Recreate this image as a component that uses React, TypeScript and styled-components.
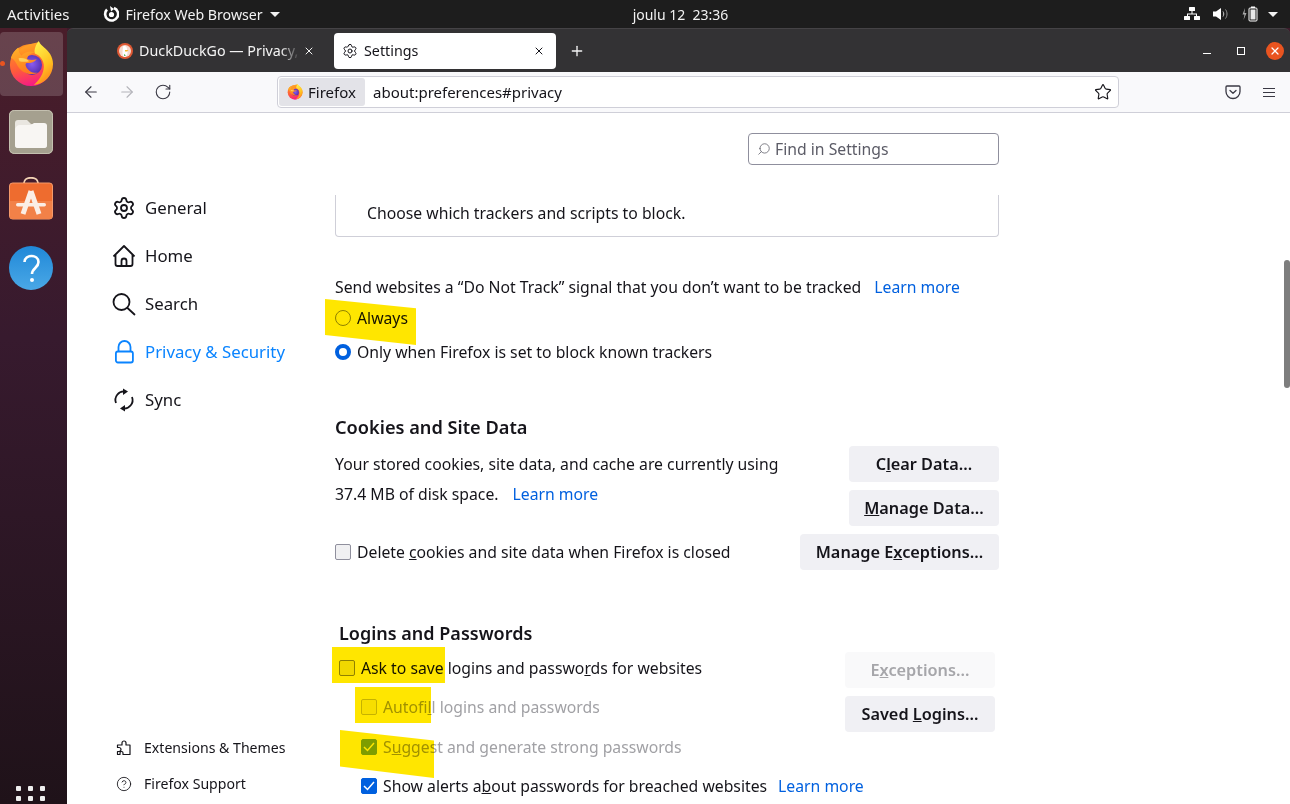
import React from "react";
import styled, { createGlobalStyle } from "styled-components";
import { Search, Settings, Star, X, Plus, ArrowLeft, ArrowRight, RotateCw, CircleHelp } from "lucide-react";

const UI_FONT = `"Noto Sans", "Open Sans", sans-serif`;

const GlobalStyle = createGlobalStyle`
  html, body {
    margin: 0;
    height: 100%;
    overflow: hidden;
    background: #fff;
  }
  body {
    font-family: ${UI_FONT};
    color: #15141a;
  }
  * {
    box-sizing: border-box;
  }
`;

const Desktop = styled.div`
  width: 1290px;
  height: 804px;
  display: flex;
  flex-direction: column;
  overflow: hidden;
  position: relative;
`;

const TopBar = styled.div`
  height: 28px;
  flex: none;
  display: flex;
  align-items: center;
  background: #1d1d1d;
  color: #f2f2f2;
  font-size: 15px;
  padding: 0 0 0 7px;
`;

const TopAppMenu = styled.div`
  display: flex;
  align-items: center;
  gap: 7px;
  margin-left: 33px;
  width: 513px;
  font-size: 14.2px;
`;

const Clock = styled.div`
  width: 130px;
  text-align: center;
  white-space: nowrap;
  font-size: 14px;
`;

const TopTray = styled.div`
  margin-left: auto;
  display: flex;
  align-items: center;
  gap: 13px;
  padding-right: 12px;
`;

const Caret = styled.span`
  width: 0;
  height: 0;
  border-left: 5px solid transparent;
  border-right: 5px solid transparent;
  border-top: 5px solid #f2f2f2;
`;

const TrayCaret = styled(Caret)`
  margin-left: -3px;
`;

const Body = styled.div`
  flex: 1;
  display: flex;
  min-height: 0;
  background: #3d1b2b;
`;

const Dock = styled.div`
  width: 67px;
  flex: none;
  display: flex;
  flex-direction: column;
  align-items: flex-start;
  background: linear-gradient(180deg, #4a1d2a 0%, #371a2e 40%, #1f1219 100%);
  padding-top: 4px;
  position: relative;
`;

const DockItem = styled.div<{ $active?: boolean }>`
  width: 63px;
  height: 64px;
  margin-bottom: 4px;
  padding-right: 1px;
  display: flex;
  align-items: center;
  justify-content: center;
  border-radius: 4px;
  position: relative;
  background: ${(p) => (p.$active ? "rgba(255,255,255,0.17)" : "transparent")};
`;

const RunDot = styled.span`
  position: absolute;
  left: 0;
  top: 29px;
  width: 5px;
  height: 5px;
  border-radius: 50%;
  background: #e95420;
`;

const AppGrid = styled.div`
  margin-top: auto;
  margin-left: 16px;
  height: 18px;
  display: grid;
  grid-template-columns: repeat(3, 5px);
  grid-auto-rows: 5px;
  gap: 5px 7px;
  overflow: hidden;
  span {
    background: #eee;
    border-radius: 1px;
  }
`;

const Window = styled.div`
  flex: 1;
  min-width: 0;
  display: flex;
  flex-direction: column;
`;

const TabStrip = styled.div`
  height: 44px;
  flex: none;
  display: flex;
  align-items: center;
  background: #333234;
  border-radius: 6px 6px 0 0;
  border-top: 1px solid #454346;
  color: #f4f4f4;
  font-size: 14.3px;
  padding-left: 42px;
`;

const Tab = styled.div<{ $selected?: boolean }>`
  height: 36px;
  width: ${(p) => (p.$selected ? 222 : 217)}px;
  margin-right: ${(p) => (p.$selected ? 0 : 8)}px;
  flex: none;
  display: flex;
  align-items: center;
  gap: 6px;
  padding: 0 11px 0 8px;
  border-radius: 4px;
  background: ${(p) => (p.$selected ? "#fff" : "transparent")};
  color: ${(p) => (p.$selected ? "#15141a" : "#f4f4f4")};
`;

const TabLabel = styled.span<{ $fade?: boolean }>`
  flex: 1;
  overflow: hidden;
  white-space: nowrap;
  margin-top: -1px;
  ${(p) =>
    p.$fade &&
    "margin-right: -3px; mask-image: linear-gradient(90deg, #000 88%, transparent);"}
`;

const NewTab = styled.div`
  margin-left: 13px;
  display: flex;
`;

const WindowControls = styled.div`
  margin-left: auto;
  display: flex;
  align-items: center;
  gap: 26px;
  padding-right: 6px;
`;

const MinimizeGlyph = styled.span`
  width: 8px;
  height: 1px;
  margin-top: 5px;
  background: #fff;
`;

const MaximizeGlyph = styled.span`
  width: 8px;
  height: 8px;
  border: 1px solid #fff;
`;

const CloseCircle = styled.div`
  width: 18px;
  height: 18px;
  margin-left: -5px;
  border-radius: 50%;
  background: #e95420;
  display: flex;
  align-items: center;
  justify-content: center;
`;

const Toolbar = styled.div`
  height: 41px;
  flex: none;
  display: flex;
  align-items: center;
  background: #f9f9fb;
  border-bottom: 1px solid #cfcfd8;
  padding-left: 15px;
`;

const NavButtons = styled.div`
  display: flex;
  gap: 18px;
  width: 195px;
`;

const UrlBar = styled.div`
  width: 842px;
  height: 32px;
  display: flex;
  align-items: center;
  background: #fff;
  border: 1px solid #cfcfd8;
  border-radius: 4px;
  padding: 1px;
  font-size: 15px;
`;

const IdentityBox = styled.div`
  height: 28px;
  width: 86px;
  display: flex;
  align-items: center;
  gap: 5px;
  padding-left: 8px;
  background: #e3e3e8;
  border-radius: 3px;
`;

const UrlText = styled.span`
  margin-left: 8px;
  flex: 1;
`;

const BookmarkStar = styled(Star)`
  margin-right: 5px;
`;

const ToolbarRight = styled.div`
  display: flex;
  align-items: center;
  gap: 22px;
  margin-left: 106px;
`;

const HamburgerGlyph = styled.span`
  width: 12px;
  height: 9px;
  border-top: 1px solid #3a3944;
  border-bottom: 1px solid #3a3944;
  position: relative;
  &::after {
    content: "";
    position: absolute;
    left: 0;
    right: 0;
    top: 3px;
    height: 1px;
    background: #3a3944;
  }
`;

const Page = styled.div`
  flex: 1;
  min-height: 0;
  display: flex;
  position: relative;
  overflow: hidden;
  background: #fff;
`;

const Sidebar = styled.nav`
  width: 268px;
  flex: none;
  display: flex;
  flex-direction: column;
  padding: 71px 0 2px 45px;
`;

const NavItem = styled.div<{ $active?: boolean }>`
  height: 48px;
  display: flex;
  align-items: center;
  gap: 9px;
  font-size: 16.8px;
  color: ${(p) => (p.$active ? "#0a84ff" : "#15141a")};
`;

const NudgedLabel = styled.span`
  margin-top: -2px;
`;

const SidebarFooter = styled.div`
  margin-top: auto;
`;

const FooterItem = styled.div`
  height: 36px;
  display: flex;
  align-items: center;
  gap: 12px;
  padding-left: 4px;
  font-size: 14.1px;
`;

const Main = styled.main`
  width: 664px;
  flex: none;
  display: flex;
  flex-direction: column;
  padding-top: 20px;
  font-size: 15.75px;
`;

const FindBox = styled.div`
  align-self: flex-end;
  width: 251px;
  height: 32px;
  flex: none;
  display: flex;
  align-items: center;
  gap: 4px;
  padding-left: 8px;
  border: 1px solid #8f8f9d;
  border-radius: 4px;
  color: #5b5b66;
`;

const FindIcon = styled(Search)`
  transform: scaleX(-1);
`;

const ClippedCard = styled.div`
  margin-top: 30px;
  height: 42px;
  flex: none;
  padding: 8px 0 0 31px;
  line-height: 20px;
  border: 1px solid #cfcfd8;
  border-top: none;
  border-radius: 0 0 4px 4px;
`;

const Line = styled.div<{ $top?: number }>`
  height: 24px;
  flex: none;
  line-height: 24px;
  white-space: nowrap;
  margin-top: ${(p) => p.$top ?? 0}px;
  position: relative;
`;

const OptionRow = styled(Line)<{ $indent?: boolean; $muted?: boolean }>`
  display: flex;
  align-items: center;
  gap: 6px;
  padding-left: ${(p) => (p.$indent ? 22 : 0)}px;
  color: ${(p) => (p.$muted ? "#a1a1a5" : "#15141a")};
`;

const Link = styled.a<{ $gap?: number }>`
  color: #0060df;
  margin-left: ${(p) => p.$gap ?? 11}px;
`;

const Radio = styled.span<{ $on?: boolean }>`
  width: 16px;
  height: 16px;
  flex: none;
  border-radius: 50%;
  background: #fff;
  border: ${(p) => (p.$on ? "4px solid #0060df" : "1px solid #8f8f9d")};
`;

const CheckBox = styled.span<{ $on?: boolean; $muted?: boolean }>`
  width: 16px;
  height: 16px;
  flex: none;
  border-radius: 2px;
  display: flex;
  align-items: center;
  justify-content: center;
  background: ${(p) => (p.$on ? "#0060df" : "#f0f0f2")};
  border: 1px solid ${(p) => (p.$on ? "#0060df" : "#8f8f9d")};
  opacity: ${(p) => (p.$muted ? 0.5 : 1)};
`;

const Heading = styled.h2<{ $inset?: boolean; $size: number }>`
  margin: 49px 0 0;
  height: 28px;
  flex: none;
  line-height: 28px;
  font-size: ${(p) => p.$size}px;
  font-weight: 600;
  white-space: nowrap;
  padding-left: ${(p) => (p.$inset ? 4 : 0)}px;
`;

const CookieGrid = styled.div`
  margin-top: 5px;
  display: grid;
  grid-template-columns: 1fr auto;
  row-gap: 8px;
  align-items: center;
`;

const UsageText = styled.div`
  align-self: start;
  padding-top: 3px;
  line-height: 30px;
  width: 450px;
  white-space: nowrap;
`;

const ButtonStack = styled.div`
  display: flex;
  flex-direction: column;
  align-items: flex-end;
  gap: 8px;
`;

const Button = styled.div<{ $disabled?: boolean; $wide?: boolean }>`
  width: ${(p) => (p.$wide ? 199 : 150)}px;
  height: 36px;
  display: flex;
  align-items: center;
  justify-content: center;
  border-radius: 4px;
  font-weight: 600;
  font-size: 16.3px;
  white-space: nowrap;
  background: ${(p) => (p.$disabled ? "#f9f9fa" : "#f0f0f4")};
  color: ${(p) => (p.$disabled ? "#a6a6aa" : "#15141a")};
`;

const LoginsGrid = styled.div`
  margin-top: 5px;
  padding: 0 4px;
  display: flex;
  justify-content: space-between;
`;

const LoginOptions = styled.div`
  flex: 1;
  min-width: 0;
  display: flex;
  flex-direction: column;
  padding-top: 4px;
`;

const Marker = styled.span<{ $left: number; $top: number; $w: number; $h: number; $clip?: string }>`
  position: absolute;
  left: ${(p) => p.$left}px;
  top: ${(p) => p.$top}px;
  width: ${(p) => p.$w}px;
  height: ${(p) => p.$h}px;
  background: #ffe600;
  mix-blend-mode: multiply;
  clip-path: ${(p) => p.$clip ?? "none"};
  pointer-events: none;
`;

const ScrollThumb = styled.div`
  position: absolute;
  right: 0;
  top: 147px;
  width: 6px;
  height: 128px;
  border-radius: 3px;
  background: #7e7e7e;
`;

const FirefoxLogo: React.FC<{ size: number }> = ({ size }) => {
  const id = `ff${size}`;
  return (
    <svg width={size} height={size} viewBox="0 0 48 48">
      <defs>
        <linearGradient id={`${id}a`} x1="0.3" y1="0" x2="0.6" y2="1">
          <stop offset="0" stopColor="#ff9420" />
          <stop offset="0.55" stopColor="#ff5a3c" />
          <stop offset="1" stopColor="#f5158c" />
        </linearGradient>
        <radialGradient id={`${id}b`} cx="0.5" cy="0.45" r="0.6">
          <stop offset="0" stopColor="#8a5cf0" />
          <stop offset="1" stopColor="#4c2aa8" />
        </radialGradient>
        <linearGradient id={`${id}c`} x1="0.3" y1="0" x2="0.7" y2="1">
          <stop offset="0" stopColor="#fff04a" />
          <stop offset="0.6" stopColor="#ffc01f" />
          <stop offset="1" stopColor="#ff7a1f" />
        </linearGradient>
        <linearGradient id={`${id}d`} x1="0" y1="0" x2="0.4" y2="1">
          <stop offset="0" stopColor="#ffb52a" />
          <stop offset="1" stopColor="#ff7a20" />
        </linearGradient>
      </defs>
      <circle cx="24" cy="25" r="22" fill={`url(#${id}a)`} />
      <path d="M33 1c-2 4-4 8-3 12-5-3-10-2-14 1l-1 1c-3-2-4-5-4-8-2 1-4 4-6 7l-2 8C5 9 20 3 33 1z" fill={`url(#${id}d)`} />
      <path
        d="M32 0c-3 4-5 9-4 13 6 2 11 9 9 17-1 6-5 11-10 16 11-1 20-10 20-22 0-8-5-14-9-17-2-2-5-4-6-7z"
        fill={`url(#${id}c)`}
      />
      <circle cx="25" cy="25" r="10.500" fill={`url(#${id}b)`} />
      <path
        d="M3 18c1-4 4-9 8-11 0 3 1 6 3 8 4-4 10-5 14-3-5 1-8 4-8 7 3 1 7 1 10 0-2 3-6 4-10 4-2 0-2 2-1 4 2 4 7 7 12 6-8 4-18 0-22-9-2-4-4-6-6-6z"
        fill={`url(#${id}d)`}
      />
      <path d="M11 18c4-1 8 0 11 3-3 1-7 1-10 0z" fill="#ffd05a" />
    </svg>
  );
};

const FilesIcon = () => (
  <svg width="44" height="44" viewBox="0 0 44 44">
    <rect x="0" y="0" width="44" height="44" rx="5" fill="#a5a08f" />
    <rect x="0.500" y="0.500" width="43" height="43" rx="5" fill="none" stroke="#c4c0b0" />
    <path d="M6 13a3 3 0 0 1 3-3h9l4 4h13a3 3 0 0 1 3 3v18a3 3 0 0 1-3 3H9a3 3 0 0 1-3-3z" fill="#e9e6e0" />
    <path d="M6 20a5 5 0 0 1 5-5h11l3-2h10a3 3 0 0 1 3 3v19a3 3 0 0 1-3 3H9a3 3 0 0 1-3-3z" fill="#f8f6f3" />
  </svg>
);

const SoftwareIcon = () => (
  <svg width="44" height="46" viewBox="0 0 44 46">
    <path d="M15 6c0-7 14-7 14 0" fill="none" stroke="#f3d2b4" strokeWidth="1.800" />
    <path d="M15 6l-1.500 2M29 6l1.500 2" stroke="#f3d2b4" strokeWidth="1.800" />
    <rect x="0.500" y="6" width="43" height="36" rx="3" fill="#ee6c2f" stroke="#f49a6b" />
    <path d="M1 24h42v15a3 3 0 0 1-3 3H4a3 3 0 0 1-3-3z" fill="#f28148" />
    <path d="M22 14l-8 23M22 14l8 23" stroke="#fbeee6" strokeWidth="5" fill="none" />
    <rect x="7" y="26" width="30" height="3.500" rx="1.700" fill="#fbeee6" />
  </svg>
);

const HelpIcon = () => (
  <svg width="44" height="44" viewBox="0 0 44 44">
    <defs>
      <linearGradient id="helpBg" x1="0" y1="0" x2="0" y2="1">
        <stop offset="0" stopColor="#2088d8" />
        <stop offset="1" stopColor="#4aa8e6" />
      </linearGradient>
    </defs>
    <circle cx="22" cy="22" r="22" fill="url(#helpBg)" />
    <path d="M15.500 16c0-8 14-8 14 0 0 6-6.500 6-6.500 12" fill="none" stroke="#fff" strokeWidth="2.600" />
    <circle cx="23" cy="34" r="2" fill="#fff" />
  </svg>
);

const DuckIcon = () => (
  <svg width="16" height="16" viewBox="0 0 16 16">
    <circle cx="8" cy="8" r="8" fill="#de5833" />
    <circle cx="8" cy="8" r="6" fill="#f6d9cf" />
    <path d="M6 3.500c2-1 4 0 4 2.500 0 1 .5 2 .5 4S9 14 7.500 14 5.500 11 5.500 9 6 6 6 3.500z" fill="#fff" />
    <path d="M8 7h3.500l-1.500 1.500H8z" fill="#f5b82e" />
    <path d="M7 11l2 1.500-2 .5z" fill="#4caf50" />
  </svg>
);

const FirefoxIndicator = () => (
  <svg width="16" height="16" viewBox="0 0 16 16">
    <path d="M4 3.500a6.500 6.500 0 1 0 7-1.500" fill="none" stroke="#fff" strokeWidth="2.600" />
    <circle cx="8.500" cy="8.500" r="2.600" fill="#fff" />
    <path d="M7 0l4 3-3 2.500z" fill="#fff" />
  </svg>
);

const NetworkIcon = () => (
  <svg width="16" height="14" viewBox="0 0 16 14" fill="#fff">
    <rect x="5" y="0" width="6" height="4" rx="0.500" />
    <rect x="0" y="9" width="6" height="4" rx="0.500" />
    <rect x="10" y="9" width="6" height="4" rx="0.500" />
    <path d="M7.500 4h1v2.500H13V9h-1V7.500H4V9H3V6.500h4.500z" />
  </svg>
);

const VolumeIcon = () => (
  <svg width="16" height="14" viewBox="0 0 16 14">
    <path d="M0 4.500h3L8 1v12L3 9.500H0z" fill="#fff" />
    <path d="M10 4.500c1 1.500 1 3.500 0 5" stroke="#ccc" fill="none" />
    <path d="M12.500 2.500c2 2.500 2 6.500 0 9" stroke="#999" fill="none" />
  </svg>
);

const BatteryIcon = () => (
  <svg width="16" height="16" viewBox="0 0 16 16">
    <path d="M3 2L0.500 8.500h2L1.500 14l3-7h-2z" fill="#aaa" />
    <rect x="7" y="2" width="8" height="13" rx="1" fill="none" stroke="#fff" />
    <rect x="9" y="0.500" width="4" height="1.500" fill="#fff" />
    <rect x="8.500" y="3.500" width="5" height="10" fill="#e8e8e8" />
  </svg>
);

const HomeIcon = () => (
  <svg width="24" height="24" viewBox="0 0 24 24" fill="none" stroke="#15141a" strokeWidth="1.800" strokeLinejoin="round">
    <path d="M1.500 12.500L12 2l10.500 10.500" />
    <path d="M3.500 11v9a2 2 0 0 0 2 2h13a2 2 0 0 0 2-2v-9" />
    <path d="M9.500 22v-5a2.500 2.500 0 0 1 5 0v5" />
  </svg>
);

const MagnifierIcon = () => (
  <svg width="24" height="24" viewBox="0 0 24 24" fill="none" stroke="#15141a" strokeWidth="1.800" strokeLinecap="round">
    <circle cx="9.500" cy="10" r="8" />
    <path d="M15.500 16l7 6.500" />
  </svg>
);

const LockIcon = () => (
  <svg width="24" height="24" viewBox="0 0 24 24" fill="none" stroke="#0a84ff" strokeWidth="1.800">
    <rect x="3.900" y="11.500" width="17" height="11" rx="2" />
    <path d="M6.500 11.500V7a6 6 0 0 1 12 0v4.500" />
  </svg>
);

const SyncIcon = () => (
  <svg width="24" height="24" viewBox="0 0 24 24" fill="none" stroke="#15141a" strokeWidth="1.800">
    <path d="M4 15a8.500 8.500 0 0 1 9-11.500" />
    <path d="M20 9a8.500 8.500 0 0 1-9 11.500" />
    <path d="M11 0.500l5 3-5 3.500z" fill="#15141a" stroke="none" />
    <path d="M13 23.500l-5-3 5-3.500z" fill="#15141a" stroke="none" />
  </svg>
);

const PuzzleIcon = () => (
  <svg width="16" height="16" viewBox="0 0 16 16" fill="none" stroke="#15141a" strokeWidth="1.200" strokeLinejoin="round">
    <path d="M1.500 5H6V3a2 2 0 0 1 4 0h0v2h4v9.500H7V13c0-2-3-2-3 0v1.500H1.500v-3H3a2 2 0 0 0 0-4H1.500z" />
  </svg>
);

const PocketIcon = () => (
  <svg width="16" height="16" viewBox="0 0 16 16" fill="none" stroke="#3a3944" strokeWidth="1.300" strokeLinecap="round" strokeLinejoin="round">
    <path d="M2 2h12a1 1 0 0 1 1 1v4.500a7 7 0 0 1-14 0V3a1 1 0 0 1 1-1z" />
    <path d="M5 6.500l3 2.800 3-2.800" />
  </svg>
);

const CheckMark = () => (
  <svg width="12" height="10" viewBox="0 0 12 10" fill="none" stroke="#fff" strokeWidth="1.500">
    <path d="M1 5l3.500 3.500L11 1" />
  </svg>
);

const App: React.FC = () => (
  <Desktop>
    <GlobalStyle />
    <TopBar>
      <span>Activities</span>
      <TopAppMenu>
        <FirefoxIndicator />
        <span>Firefox Web Browser</span>
        <Caret />
      </TopAppMenu>
      <Clock>joulu 12&nbsp;&nbsp;23:36</Clock>
      <TopTray>
        <NetworkIcon />
        <VolumeIcon />
        <BatteryIcon />
        <TrayCaret />
      </TopTray>
    </TopBar>
    <Body>
      <Dock>
        <DockItem $active>
          <RunDot />
          <FirefoxLogo size={46} />
        </DockItem>
        <DockItem>
          <FilesIcon />
        </DockItem>
        <DockItem>
          <SoftwareIcon />
        </DockItem>
        <DockItem>
          <HelpIcon />
        </DockItem>
        <AppGrid>
          {Array.from({ length: 6 }).map((_, i) => (
            <span key={i} />
          ))}
        </AppGrid>
      </Dock>
      <Window>
        <TabStrip>
          <Tab>
            <DuckIcon />
            <TabLabel $fade>DuckDuckGo — Privacy, s</TabLabel>
            <X size={12} color="#f4f4f4" />
          </Tab>
          <Tab $selected>
            <Settings size={16} strokeWidth={1.5} />
            <TabLabel>Settings</TabLabel>
            <X size={12} />
          </Tab>
          <NewTab>
            <Plus size={16} color="#f4f4f4" />
          </NewTab>
          <WindowControls>
            <MinimizeGlyph />
            <MaximizeGlyph />
            <CloseCircle>
              <X size={12} color="#fff" strokeWidth={2.5} />
            </CloseCircle>
          </WindowControls>
        </TabStrip>
        <Toolbar>
          <NavButtons>
            <ArrowLeft size={18} strokeWidth={1.5} color="#3a3944" />
            <ArrowRight size={18} strokeWidth={1.5} color="#b4b4ba" />
            <RotateCw size={18} strokeWidth={1.5} color="#3a3944" />
          </NavButtons>
          <UrlBar>
            <IdentityBox>
              <FirefoxLogo size={16} />
              Firefox
            </IdentityBox>
            <UrlText>about:preferences#privacy</UrlText>
            <BookmarkStar size={18} strokeWidth={1.5} />
          </UrlBar>
          <ToolbarRight>
            <PocketIcon />
            <HamburgerGlyph />
          </ToolbarRight>
        </Toolbar>
        <Page>
          <Sidebar>
            <NavItem>
              <Settings size={24} strokeWidth={1.8} />
              <NudgedLabel>General</NudgedLabel>
            </NavItem>
            <NavItem>
              <HomeIcon />
              <NudgedLabel>Home</NudgedLabel>
            </NavItem>
            <NavItem>
              <MagnifierIcon />
              <NudgedLabel>Search</NudgedLabel>
            </NavItem>
            <NavItem $active>
              <LockIcon />
              <NudgedLabel>Privacy &amp; Security</NudgedLabel>
            </NavItem>
            <NavItem>
              <SyncIcon />
              <NudgedLabel>Sync</NudgedLabel>
            </NavItem>
            <SidebarFooter>
              <FooterItem>
                <PuzzleIcon />
                <NudgedLabel>Extensions &amp; Themes</NudgedLabel>
              </FooterItem>
              <FooterItem>
                <CircleHelp size={16} strokeWidth={1.3} />
                <NudgedLabel>Firefox Support</NudgedLabel>
              </FooterItem>
            </SidebarFooter>
          </Sidebar>
          <Main>
            <FindBox>
              <FindIcon size={14} strokeWidth={1.3} />
              Find in Settings
            </FindBox>
            <ClippedCard>Choose which trackers and scripts to block.</ClippedCard>
            <Line $top={38}>
              Send websites a “Do Not Track” signal that you don’t want to be tracked
              <Link $gap={13}>Learn more</Link>
            </Line>
            <OptionRow $top={7}>
              <Radio />
              Always
              <Marker $left={-10} $top={-7} $w={91} $h={46} $clip="polygon(0 0, 100% 20%, 100% 100%, 0 78%)" />
            </OptionRow>
            <OptionRow $top={10}>
              <Radio $on />
              Only when Firefox is set to block known trackers
            </OptionRow>
            <Heading $size={18.2}>Cookies and Site Data</Heading>
            <CookieGrid>
              <UsageText>
                Your stored cookies, site data, and cache are currently using
                <br />
                37.4 MB of disk space.
                <Link $gap={14}>Learn more</Link>
              </UsageText>
              <ButtonStack>
                <Button>
                  <span>
                    C<u>l</u>ear Data…
                  </span>
                </Button>
                <Button>
                  <span>
                    <u>M</u>anage Data…
                  </span>
                </Button>
              </ButtonStack>
              <OptionRow>
                <CheckBox />
                <span>
                  Delete <u>c</u>ookies and site data when Firefox is closed
                </span>
              </OptionRow>
              <Button $wide>
                <span>
                  Manage E<u>x</u>ceptions…
                </span>
              </Button>
            </CookieGrid>
            <Heading $inset $size={18}>
              Logins and Passwords
            </Heading>
            <LoginsGrid>
              <LoginOptions>
                <OptionRow>
                  <CheckBox />
                  <span>
                    Ask to save logins and passwo<u>r</u>ds for websites
                  </span>
                  <Marker $left={-7} $top={-9} $w={113} $h={36} />
                </OptionRow>
                <OptionRow $indent $muted $top={15}>
                  <CheckBox $muted />
                  <span>
                    Autofi<u>l</u>l logins and passwords
                  </span>
                  <Marker $left={16} $top={-8} $w={76} $h={36} />
                </OptionRow>
                <OptionRow $indent $muted $top={16}>
                  <CheckBox $on $muted>
                    <CheckMark />
                  </CheckBox>
                  <span>
                    S<u>u</u>ggest and generate strong passwords
                  </span>
                  <Marker $left={1} $top={-5} $w={94} $h={48} $clip="polygon(0 0, 100% 22%, 100% 100%, 0 76%)" />
                </OptionRow>
                <OptionRow $indent $top={15}>
                  <CheckBox $on>
                    <CheckMark />
                  </CheckBox>
                  <span>
                    Show alerts a<u>b</u>out passwords for breached websites
                  </span>
                  <Link $gap={5}>Learn more</Link>
                </OptionRow>
              </LoginOptions>
              <ButtonStack>
                <Button $disabled>
                  <span>
                    E<u>x</u>ceptions…
                  </span>
                </Button>
                <Button>
                  <span>
                    Saved <u>L</u>ogins…
                  </span>
                </Button>
              </ButtonStack>
            </LoginsGrid>
          </Main>
          <ScrollThumb />
        </Page>
      </Window>
    </Body>
  </Desktop>
);

export default App;
